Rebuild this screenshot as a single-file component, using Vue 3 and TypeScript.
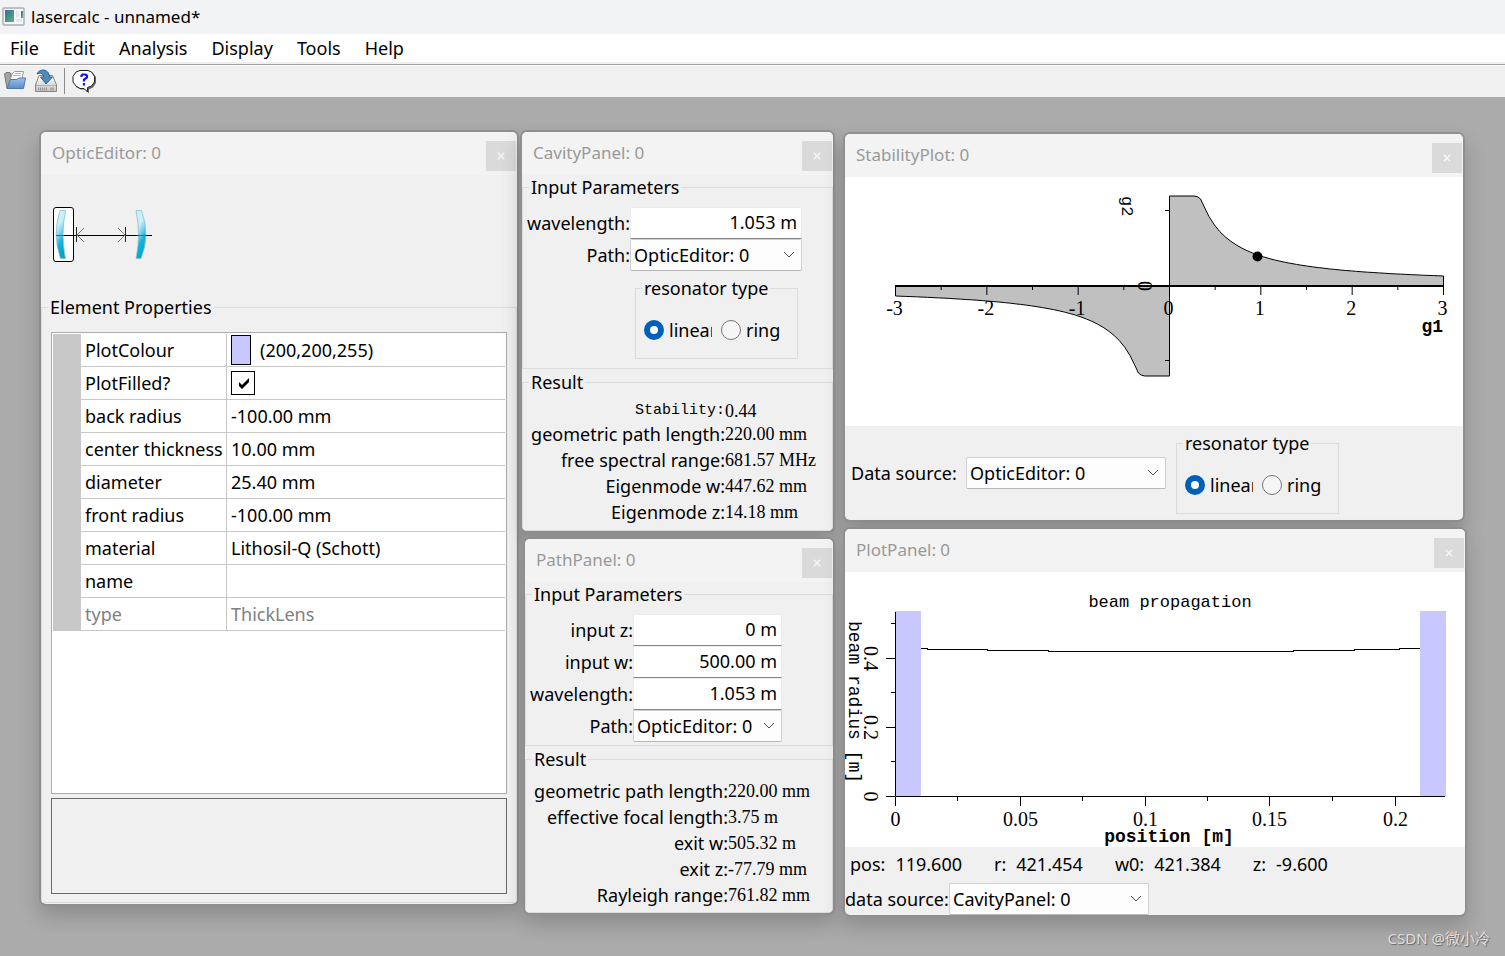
<script setup lang="ts">
import { ref } from 'vue'

const menus = ['File', 'Edit', 'Analysis', 'Display', 'Tools', 'Help']

interface Property {
  name: string
  value: string
  kind?: 'colour' | 'check' | 'readonly'
}

const properties: Property[] = [
  { name: 'PlotColour', value: '(200,200,255)', kind: 'colour' },
  { name: 'PlotFilled?', value: '', kind: 'check' },
  { name: 'back radius', value: '-100.00 mm' },
  { name: 'center thickness', value: '10.00 mm' },
  { name: 'diameter', value: '25.40 mm' },
  { name: 'front radius', value: '-100.00 mm' },
  { name: 'material', value: 'Lithosil-Q (Schott)' },
  { name: 'name', value: '' },
  { name: 'type', value: 'ThickLens', kind: 'readonly' },
]

const cavityResults = [
  ['geometric path length:', '220.00 mm'],
  ['free spectral range:', '681.57 MHz'],
  ['Eigenmode w:', '447.62 mm'],
  ['Eigenmode z:', '14.18 mm'],
]

const pathInputs = ref([
  { id: 'path-z', label: 'input z:', value: '0 m' },
  { id: 'path-w', label: 'input w:', value: '500.00 m' },
  { id: 'path-wl', label: 'wavelength:', value: '1.053 m' },
])

const pathResults = [
  ['geometric path length:', '220.00 mm'],
  ['effective focal length:', '3.75 m'],
  ['exit w:', '505.32 m'],
  ['exit z:', '-77.79 mm'],
  ['Rayleigh range:', '761.82 mm'],
]

const readout = [
  ['pos:', '119.600'],
  ['r:', '421.454'],
  ['w0:', '421.384'],
  ['z:', '-9.600'],
]

const filled = ref(true)
const wavelength = ref('1.053 m')
const cavityType = ref('linear')
const stabilityType = ref('linear')

// Stability region g1 * g2 = 1 in both quadrants
const ox = 1169.5
const oy = 286
const unitX = 274 / 3
const unitY = 30
function branch(sign: number): string {
  const at = (g: number, h: number) => `${(ox + sign * g * unitX).toFixed(1)},${(oy - sign * h * unitY).toFixed(1)}`
  const points = [at(0, 0), at(0, 3), at(0.27, 3), at(0.31, 2.97), at(0.34, 2.9)]
  for (let g = 0.37; g < 3; g += 0.06) points.push(at(g, 1 / g))
  points.push(at(3, 1 / 3), at(3, 0))
  return points.join(' ')
}
const branches = [branch(1), branch(-1)]
const gTicks = [-3, -2, -1, 0, 1, 2, 3]
const gMinor = [-2.5, -1.5, -0.5, 0.5, 1.5, 2.5]

const posTicks = [
  { x: 895.5, t: '0' },
  { x: 1020.5, t: '0.05' },
  { x: 1145.5, t: '0.1' },
  { x: 1269.5, t: '0.15' },
  { x: 1395.5, t: '0.2' },
]
const posMinor = [957.5, 1082.5, 1207.5, 1332.5]
const radTicks = [
  { y: 796.5, t: '0' },
  { y: 727.5, t: '0.2' },
  { y: 658.5, t: '0.4' },
]
const radMinor = [761.5, 692.5, 623.5]
</script>

<template>
  <div class="app">
    <header class="caption">
      <svg class="app-icon" width="23" height="20" viewBox="0 0 23 20">
        <defs>
          <linearGradient id="ai" x1="0" y1="0" x2="1" y2="1">
            <stop offset="0" stop-color="#3c69a0" />
            <stop offset="1" stop-color="#55b776" />
          </linearGradient>
        </defs>
        <rect x="1" y="1" width="21" height="17" rx="1" fill="#f4f6f8" stroke="#a9b0b7" stroke-width="1.5" />
        <rect x="3" y="3" width="9" height="12" fill="url(#ai)" />
        <rect x="14" y="4" width="3" height="6" fill="#e4e8ea" />
        <rect x="19" y="4" width="2" height="7" fill="url(#ai)" />
        <rect x="14" y="12" width="6" height="3" fill="#e4e8ea" />
      </svg>
      <span>lasercalc - unnamed*</span>
    </header>

    <nav class="menu">
      <button v-for="m in menus" :key="m" type="button">{{ m }}</button>
    </nav>

    <div class="toolbar">
      <button type="button" aria-label="Open">
        <svg width="24" height="24" viewBox="0 0 24 24">
          <defs>
            <linearGradient id="fold" x1="0" y1="0" x2="0" y2="1">
              <stop offset="0" stop-color="#9cc3ea" />
              <stop offset="1" stop-color="#5a8cc8" />
            </linearGradient>
          </defs>
          <path d="M1.500 5 L3 3.500 H7 L8 5 V19.500 H4 Z" fill="#a2a4a4" stroke="#777" />
          <path d="M6.500 13 L9 5 L11.500 2.500 H20.500 L18.500 12 Z" fill="#fbfbfb" stroke="#9a9a9a" />
          <path d="M12 4.500 H18 M10.500 6.500 H17.500" stroke="#b5b5b5" />
          <path d="M7.500 10.500 H14 L15.500 9 H22.500 L20.500 19.500 H4 Z" fill="url(#fold)" stroke="#4b79b2" />
        </svg>
      </button>
      <button type="button" aria-label="Save">
        <svg width="24" height="24" viewBox="0 0 24 24">
          <defs>
            <linearGradient id="disk" x1="0" y1="0" x2="0" y2="1">
              <stop offset="0" stop-color="#fff" />
              <stop offset="1" stop-color="#c4c4c4" />
            </linearGradient>
          </defs>
          <path d="M5 6.500 H18.500 L22.500 16 V22.500 H1.500 V16 Z" fill="url(#disk)" stroke="#858585" />
          <path d="M2 16.500 H22" stroke="#b0b0b0" />
          <path d="M4 20 H14" stroke="#8f8f8f" stroke-width="3" stroke-dasharray="1 1" />
          <path d="M16 20 H20" stroke="#aaa" stroke-width="3" />
          <path d="M3 5 C5 -0.500 15 -1 15.500 8 H18.500 L12 15 L6.500 8 H9.500 C9.500 4 6 3.500 3 5 Z" fill="#4d8cbb" stroke="#2e6390" />
        </svg>
      </button>
      <span class="bar"></span>
      <button type="button" aria-label="Help">
        <svg width="25" height="25" viewBox="0 0 25 25">
          <path d="M10 2 H18 L21 4 L24 8 V14 L21 18.500 L17 20.500 V24.500 L13 20.500 H9 L4 18 Z" fill="#666" />
          <path d="M8 1.500 H16 L19.500 3 L22.500 7.500 V13 L19.500 17 L15.500 18.500 V23 L12 19.500 H8 L4 17 L1 13 V7.500 L4 3 Z" fill="#fff" stroke="#222" />
          <path d="M9.500 8 V6.500 L10.500 5.500 H13.500 L15 6.500 V8.500 L12 10.500 V12.500 M12 14 V16.500" fill="none" stroke="#1515ee" stroke-width="2.200" />
        </svg>
      </button>
    </div>

    <main class="desktop">
      <section class="win optic">
        <header class="bar-title">
          <h2>OpticEditor: 0</h2>
          <button type="button" class="close" aria-label="Close OpticEditor">
            <svg width="10" height="10" viewBox="0 0 10 10"><path d="M1 1 L9 9 M9 1 L1 9" /></svg>
          </button>
        </header>
        <div class="canvas">
          <svg width="101" height="56" viewBox="53 207 101 56">
            <defs>
              <linearGradient id="lens" x1="0" y1="0" x2="0.300" y2="1">
                <stop offset="0" stop-color="#cdeefa" />
                <stop offset="0.350" stop-color="#c9f0fb" />
                <stop offset="0.500" stop-color="#8fd9ee" />
                <stop offset="0.750" stop-color="#14b2d8" />
                <stop offset="1" stop-color="#00a5cf" />
              </linearGradient>
            </defs>
            <rect x="53.500" y="207.500" width="20" height="54" rx="2.500" fill="#fff" stroke="#000" />
            <path d="M56 235.500 H152" stroke="#000" />
            <path d="M60 210.500 H65.500 Q60.500 235 65.500 258.500 H60.500 Q52 235 60 210.500 Z" fill="url(#lens)" stroke="#8ac0cd" stroke-width="0.800" />
            <path d="M141.500 210.500 H136 Q141 235 136 258.500 H141 Q150.500 235 141.500 210.500 Z" fill="url(#lens)" stroke="#8ac0cd" stroke-width="0.800" />
            <path d="M56 235.500 H63 M138 235.500 H146" stroke="#28738a" />
            <path d="M76.500 227 V242 M125.500 227 V242" stroke="#222" />
            <path d="M84 228 L77 235 L84 242 M118 228 L125 235 L118 242" fill="none" stroke="#777" />
          </svg>
        </div>
        <fieldset class="group grow">
          <legend>Element Properties</legend>
          <div class="grid-box">
            <table class="props">
              <tbody>
                <tr v-for="p in properties" :key="p.name" :class="{ dim: p.kind === 'readonly' }">
                  <th scope="row">{{ p.name }}</th>
                  <td>
                    <div class="cell">
                      <span v-if="p.kind === 'colour'" class="swatch"></span>
                      <input v-if="p.kind === 'check'" v-model="filled" type="checkbox" class="tick" aria-label="PlotFilled?" />
                      <span v-else>{{ p.value }}</span>
                    </div>
                  </td>
                </tr>
              </tbody>
            </table>
          </div>
          <div class="help-box"></div>
        </fieldset>
      </section>

      <section class="win cavity">
        <header class="bar-title">
          <h2>CavityPanel: 0</h2>
          <button type="button" class="close" aria-label="Close CavityPanel">
            <svg width="10" height="10" viewBox="0 0 10 10"><path d="M1 1 L9 9 M9 1 L1 9" /></svg>
          </button>
        </header>
        <fieldset class="group form">
          <legend>Input Parameters</legend>
          <div class="row">
            <label for="cav-wl">wavelength:</label>
            <input id="cav-wl" v-model="wavelength" type="text" />
          </div>
          <div class="row">
            <label for="cav-path">Path:</label>
            <span class="combo">
              <select id="cav-path"><option>OpticEditor: 0</option></select>
              <svg width="12" height="7" viewBox="0 0 12 7"><path d="M1 1 L6 6 L11 1" /></svg>
            </span>
          </div>
          <fieldset class="group radios indent">
            <legend>resonator type</legend>
            <div class="choices">
              <label class="choice cut"><input v-model="cavityType" type="radio" name="cavity" value="linear" />linear</label>
              <label class="choice"><input v-model="cavityType" type="radio" name="cavity" value="ring" />ring</label>
            </div>
          </fieldset>
        </fieldset>
        <fieldset class="group results grow">
          <legend>Result</legend>
          <dl>
            <dt class="mono">Stability:</dt>
            <dd class="short">0.44</dd>
            <template v-for="r in cavityResults" :key="r[0]">
              <dt>{{ r[0] }}</dt>
              <dd>{{ r[1] }}</dd>
            </template>
          </dl>
        </fieldset>
      </section>

      <section class="win path">
        <header class="bar-title">
          <h2>PathPanel: 0</h2>
          <button type="button" class="close" aria-label="Close PathPanel">
            <svg width="10" height="10" viewBox="0 0 10 10"><path d="M1 1 L9 9 M9 1 L1 9" /></svg>
          </button>
        </header>
        <fieldset class="group form narrow">
          <legend>Input Parameters</legend>
          <div v-for="f in pathInputs" :key="f.id" class="row">
            <label :for="f.id">{{ f.label }}</label>
            <input :id="f.id" v-model="f.value" type="text" />
          </div>
          <div class="row">
            <label for="path-path">Path:</label>
            <span class="combo">
              <select id="path-path"><option>OpticEditor: 0</option></select>
              <svg width="12" height="7" viewBox="0 0 12 7"><path d="M1 1 L6 6 L11 1" /></svg>
            </span>
          </div>
        </fieldset>
        <fieldset class="group results grow">
          <legend>Result</legend>
          <dl>
            <template v-for="r in pathResults" :key="r[0]">
              <dt>{{ r[0] }}</dt>
              <dd>{{ r[1] }}</dd>
            </template>
          </dl>
        </fieldset>
      </section>

      <section class="win stability">
        <header class="bar-title">
          <h2>StabilityPlot: 0</h2>
          <button type="button" class="close" aria-label="Close StabilityPlot">
            <svg width="10" height="10" viewBox="0 0 10 10"><path d="M1 1 L9 9 M9 1 L1 9" /></svg>
          </button>
        </header>
        <svg class="plot" viewBox="845 177 618 249">
          <polygon v-for="b in branches" :key="b" :points="b" fill="#c0c0c0" stroke="#000" />
          <path d="M895 286 H1443.500" stroke="#000" stroke-width="2" />
          <path d="M1165 210.500 H1169 M1165 360.500 H1169" stroke="#000" />
          <g v-for="g in gTicks" :key="g">
            <line :x1="ox + g * unitX" :x2="ox + g * unitX" y1="286" y2="295" stroke="#000" />
            <text :x="ox + g * unitX - 1" y="315" text-anchor="middle" class="num">{{ g }}</text>
          </g>
          <line v-for="g in gMinor" :key="g" :x1="ox + g * unitX" :x2="ox + g * unitX" y1="286" y2="290" stroke="#000" />
          <ellipse cx="1257.500" cy="256.500" rx="5" ry="5" />
          <text x="1443" y="332" text-anchor="end" class="word bold">g1</text>
          <text transform="translate(1122 196) rotate(90)" class="word">g2</text>
          <text transform="translate(1138 286) rotate(90)" text-anchor="middle" class="num">0</text>
        </svg>
        <div class="foot">
          <label for="stab-src">Data source:</label>
          <span class="combo wide">
            <select id="stab-src"><option>OpticEditor: 0</option></select>
            <svg width="12" height="7" viewBox="0 0 12 7"><path d="M1 1 L6 6 L11 1" /></svg>
          </span>
          <fieldset class="group radios">
            <legend>resonator type</legend>
            <div class="choices">
              <label class="choice cut"><input v-model="stabilityType" type="radio" name="stab" value="linear" />linear</label>
              <label class="choice"><input v-model="stabilityType" type="radio" name="stab" value="ring" />ring</label>
            </div>
          </fieldset>
        </div>
      </section>

      <section class="win beam">
        <header class="bar-title">
          <h2>PlotPanel: 0</h2>
          <button type="button" class="close" aria-label="Close PlotPanel">
            <svg width="10" height="10" viewBox="0 0 10 10"><path d="M1 1 L9 9 M9 1 L1 9" /></svg>
          </button>
        </header>
        <svg class="plot" viewBox="845 572 620 275">
          <text x="1170" y="607" text-anchor="middle" class="word">beam propagation</text>
          <rect x="895" y="611" width="26" height="185" fill="#c8c8ff" />
          <rect x="1420" y="611" width="26" height="185" fill="#c8c8ff" />
          <path d="M921 648.500 H927 V649.500 H987 V650.500 H1048 V651.500 H1293 V650.500 H1354 V649.500 H1399 V648.500 H1420" fill="none" stroke="#000" shape-rendering="crispEdges" />
          <path d="M895.500 612 V796.500 H1445" fill="none" stroke="#000" />
          <g v-for="t in posTicks" :key="t.t">
            <line :x1="t.x" :x2="t.x" y1="797" y2="806" stroke="#000" />
            <text :x="t.x" y="826" text-anchor="middle" class="num">{{ t.t }}</text>
          </g>
          <line v-for="x in posMinor" :key="x" :x1="x" :x2="x" y1="797" y2="801" stroke="#000" />
          <g v-for="t in radTicks" :key="t.t">
            <line x1="886" x2="895" :y1="t.y" :y2="t.y" stroke="#000" />
            <text :transform="`translate(864 ${t.y}) rotate(90)`" text-anchor="middle" class="num">{{ t.t }}</text>
          </g>
          <line v-for="y in radMinor" :key="y" x1="891" x2="895" :y1="y" :y2="y" stroke="#000" />
          <text x="1169" y="842" text-anchor="middle" class="word bold">position [m]</text>
          <text transform="translate(849 621) rotate(90)" class="word large">beam radius [m]</text>
        </svg>
        <div class="readout">
          <span v-for="r in readout" :key="r[0]" class="pair"><span>{{ r[0] }}</span><span>{{ r[1] }}</span></span>
        </div>
        <div class="source">
          <label for="beam-src">data source:</label>
          <span class="combo wide">
            <select id="beam-src"><option>CavityPanel: 0</option></select>
            <svg width="12" height="7" viewBox="0 0 12 7"><path d="M1 1 L6 6 L11 1" /></svg>
          </span>
        </div>
      </section>

      <span class="mark">CSDN @微小冷</span>
    </main>
  </div>
</template>

<style>
body {
  margin: 0;
}
</style>

<style scoped>
.app {
  display: flex;
  flex-direction: column;
  min-height: 100vh;
  font: 18px/24px 'Noto Sans', 'Noto Sans CJK SC', sans-serif;
  color: #000;
  background: #ababab;
}
.app *,
.app {
  box-sizing: border-box;
}
button,
input,
select {
  font: inherit;
  color: inherit;
  margin: 0;
}
.caption {
  display: flex;
  align-items: center;
  gap: 6px;
  height: 34px;
  padding-left: 2px;
  background: #f1f3f5;
  font-size: 17px;
}
.menu {
  display: flex;
  gap: 24px;
  height: 30px;
  padding-left: 10px;
  background: #fff;
  border-bottom: 2px solid #f0f0f0;
}
.menu button {
  padding: 0;
  border: 0;
  background: none;
}
.toolbar {
  display: flex;
  align-items: center;
  height: 33px;
  padding-left: 3px;
  background: #f0f0f0;
  border-top: 1px solid #a0a0a0;
  box-shadow: inset 0 1px #fff;
}
.toolbar button {
  display: flex;
  padding: 0;
  margin-right: 7px;
  border: 0;
  background: none;
}
.toolbar .bar {
  width: 1px;
  height: 26px;
  margin: 0 7px 0 -1px;
  background: #8c8c8c;
}
.desktop {
  position: relative;
  flex: 1;
  min-height: 859px;
}
.win {
  position: absolute;
  display: flex;
  flex-direction: column;
  overflow: hidden;
  border-radius: 5px;
  background: #f0f0f0;
  box-shadow: 0 0 0 2px #8f8f8f, 0 10px 20px 2px rgba(0, 0, 0, 0.18);
}
.optic {
  left: 41px;
  top: 35px;
  width: 476px;
  height: 772px;
}
.cavity {
  left: 522px;
  top: 35px;
  width: 311px;
  height: 399px;
}
.path {
  left: 525px;
  top: 442px;
  width: 308px;
  height: 374px;
}
.stability {
  left: 845px;
  top: 37px;
  width: 618px;
}
.beam {
  left: 845px;
  top: 432px;
  width: 620px;
}
.bar-title {
  display: flex;
  justify-content: space-between;
  height: 43px;
  padding: 9px 1px 0 11px;
  background: #f3f3f3;
}
h2 {
  margin: 0;
  font-size: 17px;
  font-weight: 400;
  color: #999;
}
.close {
  display: flex;
  align-items: center;
  justify-content: center;
  width: 30px;
  height: 30px;
  padding: 0;
  border: 0;
  background: #dadada;
}
.close svg {
  width: 8px;
  height: 8px;
}
.close path {
  stroke: #f5f5f5;
  stroke-width: 2;
}
.canvas {
  height: 120px;
  padding: 32px 12px 0;
}
.group {
  min-width: 0;
  margin: 0;
  padding: 0;
  border: 1px solid #dcdcdc;
}
.group > legend {
  margin-left: 6px;
  padding: 0 2px;
}
.grow {
  flex: 1;
}
.optic .group {
  display: flex;
  flex-direction: column;
  gap: 4px;
  margin-bottom: 1px;
  padding: 13px 9px 8px;
}
.optic .group > legend {
  margin-left: -3px;
}
.grid-box {
  flex: 1;
  padding: 1px;
  border: 1px solid #acacac;
  background: #fff;
}
.help-box {
  height: 96px;
  border: 1px solid #696969;
}
.props {
  width: 100%;
  table-layout: fixed;
  border-spacing: 0;
  border-left: 28px solid #c8c8c8;
}
.props th,
.props td {
  height: 33px;
  padding: 0 0 0 4px;
  border-bottom: 1px solid #c8c8c8;
  font-weight: 400;
  text-align: left;
  white-space: nowrap;
}
.props th {
  width: 146px;
  border-right: 1px solid #c8c8c8;
}
.cell {
  display: flex;
  align-items: center;
  gap: 9px;
  height: 32px;
}
.dim {
  color: #808080;
}
.swatch {
  width: 20px;
  height: 30px;
  border: 1px solid #000;
  background: #c8c8ff;
}
.tick {
  appearance: none;
  width: 24px;
  height: 24px;
  border: 1px solid #000;
  background: #fff;
}
.tick:checked {
  background: #fff url("data:image/svg+xml,%3Csvg xmlns='http://www.w3.org/2000/svg' viewBox='0 0 22 22'%3E%3Cpath d='M7 10v4l3 3 7-7V6l-7 7z'/%3E%3C/svg%3E");
}
.form {
  padding: 8px 3px 3px;
}
.form > legend,
.results > legend {
  margin-left: 3px;
}
.results > legend {
  margin-left: 2px;
}
.cavity .form {
  padding-bottom: 9px;
  margin-bottom: 1px;
}
.path .form {
  margin-bottom: 1px;
}
.row {
  display: grid;
  grid-template-columns: 104px 172px;
  align-items: center;
  height: 32px;
}
.narrow .row {
  grid-template-columns: 104px 149px;
}
.row > label {
  display: flex;
  justify-content: flex-end;
  padding-bottom: 1px;
  white-space: nowrap;
}
input[type='text'] {
  width: 100%;
  height: 32px;
  padding: 0 4px 2px;
  border: 1px solid #ececec;
  border-bottom: 1px solid #868686;
  background: #fff;
  text-align: right;
}
.combo {
  position: relative;
  display: block;
  height: 32px;
}
.combo select {
  appearance: none;
  display: block;
  width: 100%;
  height: 32px;
  padding: 0 27px 0 3px;
  border: 1px solid #d0d0d0;
  border-bottom-color: #b8b8b8;
  border-radius: 2px;
  background: #fdfdfd;
}
.combo svg {
  position: absolute;
  right: 7px;
  top: 12px;
  pointer-events: none;
}
.combo path {
  fill: none;
  stroke: #505050;
}
.wide {
  width: 200px;
}
.radios {
  width: 163px;
  height: 83px;
}
.indent {
  margin: 5px 0 0 109px;
}
.choices {
  display: flex;
  align-items: center;
  gap: 9px;
  height: 60px;
  padding-left: 8px;
}
.choice {
  display: flex;
  align-items: center;
  gap: 5px;
}
.cut {
  width: 68px;
  overflow: hidden;
}
.choice input {
  appearance: none;
  flex: none;
  width: 20px;
  height: 20px;
  border: 1px solid #767676;
  border-radius: 50%;
  background: #f6f6f6;
}
.choice input:checked {
  border: 6px solid #005fb8;
  background: #fff;
}
.results {
  padding: 7px 4px 0;
}
dl {
  display: grid;
  grid-template-columns: 198px 1fr;
  margin: 0;
  line-height: 26px;
  white-space: nowrap;
}
dt {
  display: flex;
  justify-content: flex-end;
}
dd {
  margin: 0;
  font-family: 'Liberation Serif', serif;
}
.mono {
  font: 15px/20px 'Liberation Mono', monospace;
}
.short {
  line-height: 20px;
}
.plot {
  display: block;
  width: 100%;
  background: #fff;
}
.num {
  font: 20px 'Liberation Serif', serif;
}
.word {
  font: 17px 'Liberation Mono', monospace;
}
.large {
  font-size: 18px;
}
.bold {
  font-size: 18px;
  font-weight: 700;
}
.foot {
  display: flex;
  align-items: center;
  padding: 5px 6px 6px;
}
.foot > label {
  width: 115px;
}
.foot .wide {
  margin-right: 10px;
}
.readout {
  display: flex;
  align-items: center;
  gap: 32px;
  height: 34px;
  margin-bottom: 2px;
  padding-left: 5px;
}
.pair {
  display: flex;
  gap: 10px;
}
.source {
  display: flex;
  align-items: center;
}
.source label {
  width: 104px;
  white-space: nowrap;
}
.mark {
  position: absolute;
  right: 15px;
  bottom: 6px;
  font-size: 15px;
  color: #dedede;
  text-shadow: 1px 1px 1px #666;
}
</style>
